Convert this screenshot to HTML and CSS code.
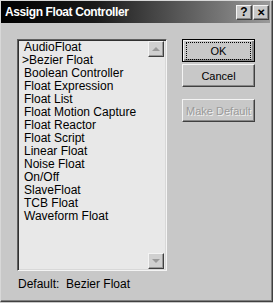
FILE: index.html
```html
<!DOCTYPE html>
<html lang="en">
<head>
    <meta charset="UTF-8">
    <title>Assign Float Controller</title>
    <link rel="stylesheet" href="styles.css">
</head>
<body>
    <div class="window">
        <div class="titlebar">
            <span class="title">Assign Float Controller</span>
            <div class="title-buttons">
                <button class="tbtn">?</button>
                <button class="tbtn close">&#x2715;</button>
            </div>
        </div>

        <div class="content">
            <div class="left">
                <div class="listbox">
                    <ul class="items">
                        <li>AudioFloat</li>
                        <li class="current">&gt;Bezier Float</li>
                        <li>Boolean Controller</li>
                        <li>Float Expression</li>
                        <li>Float List</li>
                        <li>Float Motion Capture</li>
                        <li>Float Reactor</li>
                        <li>Float Script</li>
                        <li>Linear Float</li>
                        <li>Noise Float</li>
                        <li>On/Off</li>
                        <li>SlaveFloat</li>
                        <li>TCB Float</li>
                        <li>Waveform Float</li>
                    </ul>
                    <div class="scrollbar">
                        <div class="arrow up"><span class="tri up"></span></div>
                        <div class="arrow down"><span class="tri down"></span></div>
                    </div>
                </div>
                <div class="default-label">Default:&nbsp; Bezier Float</div>
            </div>

            <div class="right">
                <button class="btn focused"><span>OK</span></button>
                <button class="btn">Cancel</button>
                <button class="btn disabled" disabled>Make Default</button>
            </div>
        </div>
    </div>
</body>
</html>
```

FILE: styles.css
```css
body {
    margin: 0;
    background: #c8c8c8;
    font-family: "Liberation Sans", Arial, sans-serif;
    font-size: 12px;
    color: #000;
}

.window {
    width: 273px;
    height: 302px;
    box-sizing: border-box;
    background: #c8c8c8;
    border: 1px solid #d8d8d8;
    border-right-color: #404040;
    border-bottom-color: #404040;
    box-shadow: inset -1px -1px 0 #808080;
    padding: 0 2px 2px 0;
}

.titlebar {
    height: 22px;
    display: flex;
    align-items: center;
    justify-content: space-between;
    background: linear-gradient(to right, #000 0%, #1a1a1a 35%, #9a9a9a 100%);
    padding: 0 1px 0 4px;
}

.title {
    color: #fff;
    font-weight: bold;
    font-size: 12px;
    letter-spacing: -0.4px;
}

.title-buttons {
    display: flex;
    gap: 1px;
}

.tbtn {
    width: 16px;
    height: 15px;
    padding: 0;
    background: #c8c8c8;
    border: 1px solid;
    border-color: #f4f4f4 #404040 #404040 #f4f4f4;
    box-shadow: inset -1px -1px 0 #888;
    font-family: "Liberation Sans", Arial, sans-serif;
    font-size: 12px;
    font-weight: bold;
    line-height: 13px;
    color: #000;
}

.tbtn.close {
    font-size: 10px;
}

.content {
    display: flex;
    padding: 16px 0 0 16px;
}

.left {
    width: 150px;
}

.listbox {
    height: 232px;
    box-sizing: border-box;
    display: flex;
    background: #e8e8e8;
    border: 1px solid;
    border-color: #606060 #f4f4f4 #f4f4f4 #606060;
    box-shadow: inset 1px 1px 0 #303030, inset -1px -1px 0 #d8d8d8;
}

.items {
    flex: 1;
    list-style: none;
    margin: 0;
    padding: 1px 0 0 6px;
}

.items li {
    height: 13px;
    line-height: 13px;
}

.items li.current {
    margin-left: -2px;
}

.scrollbar {
    width: 17px;
    display: flex;
    flex-direction: column;
    justify-content: space-between;
    padding: 1px 1px 1px 0;
}

.arrow {
    width: 16px;
    height: 16px;
    box-sizing: border-box;
    background: #d0d0d0;
    border: 1px solid;
    border-color: #f4f4f4 #404040 #404040 #f4f4f4;
    box-shadow: inset -1px -1px 0 #999;
    display: flex;
    align-items: center;
    justify-content: center;
}

.tri {
    width: 0;
    height: 0;
    border-left: 4px solid transparent;
    border-right: 4px solid transparent;
}

.tri.up {
    border-bottom: 4px solid #9a9a9a;
}

.tri.down {
    border-top: 4px solid #9a9a9a;
}

.default-label {
    margin-top: 6px;
    padding-left: 1px;
}

.right {
    display: flex;
    flex-direction: column;
    margin-left: 15px;
}

.btn {
    width: 73px;
    height: 23px;
    padding: 0;
    background: #c8c8c8;
    border: 1px solid;
    border-color: #f4f4f4 #404040 #404040 #f4f4f4;
    box-shadow: inset -1px -1px 0 #888;
    font-family: "Liberation Sans", Arial, sans-serif;
    font-size: 11px;
    color: #000;
    margin-bottom: 2px;
}

.btn.focused {
    border: 1px solid #000;
    box-shadow: inset 1px 1px 0 #f4f4f4, inset -2px -2px 0 #888;
}

.btn.focused span {
    display: block;
    margin: 2px 3px;
    padding: 2px 0;
    border: 1px dotted #000;
}

.btn.disabled {
    margin-top: 10px;
    color: #9a9a9a;
    text-shadow: 1px 1px 0 #f0f0f0;
}
```
